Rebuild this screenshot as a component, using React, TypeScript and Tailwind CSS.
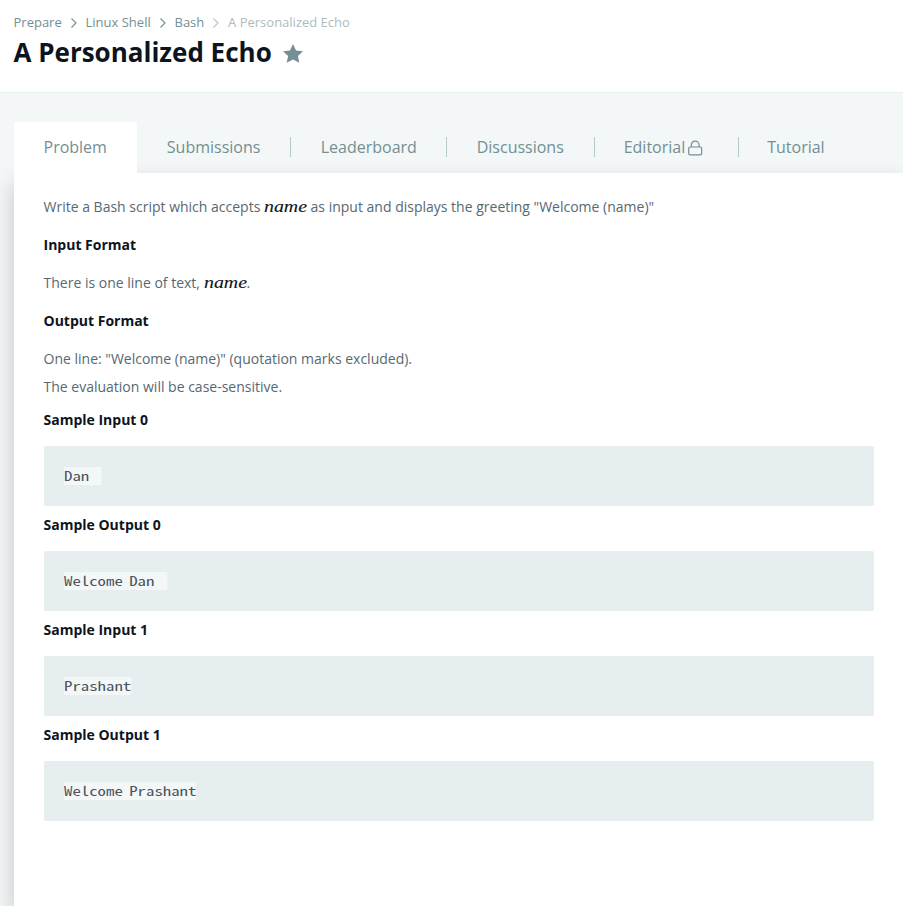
import React from "react";

const crumbs = ["Prepare", "Linux Shell", "Bash", "A Personalized Echo"];

const samples = [
  { title: "Sample Input 0", text: "Dan  " },
  { title: "Sample Output 0", text: "Welcome Dan  " },
  { title: "Sample Input 1", text: "Prashant" },
  { title: "Sample Output 1", text: "Welcome Prashant" },
];

function Chevron({ faded }: { faded: boolean }) {
  return (
    <svg width="8" height="12" viewBox="0 0 8 12" className={faded ? "ml-[7.8px] mr-[8px] opacity-50" : "ml-[7.8px] mr-[8px]"}>
      <path d="M1.5 1.5 L6 6 L1.5 10.5" fill="none" stroke="#738f93" strokeWidth="1.1" />
    </svg>
  );
}

function Lock() {
  return (
    <svg width="15" height="16" viewBox="0 0 15 16" className="ml-[3px] mt-[2px]" fill="none" stroke="#738f93" strokeWidth="1.2">
      <rect x="0.7" y="7" width="13" height="7.8" rx="1.4" />
      <path d="M3.3 7 V5 a3.9 3.9 0 0 1 7.8 0 V7" />
    </svg>
  );
}

function Name() {
  return (
    <span className="inline-block w-[43px] whitespace-nowrap align-baseline font-['Liberation_Serif',serif] text-[16px] italic leading-[20px] text-[#0e141e]">
      <span className="inline-block origin-left scale-x-[1.24] [-webkit-text-stroke:0.1px_#0e141e]">name</span>
    </span>
  );
}

function Tab({ children, width, divider }: { children: React.ReactNode; width: string; divider?: boolean }) {
  return (
    <div className={`flex h-[50px] items-center ${width}`}>
      <div className="flex h-[49px] grow items-center pl-[30px]">{children}</div>
      {divider && <div className="-mr-[0.5px] h-[20px] w-px bg-[#b7c9cc]" />}
    </div>
  );
}

export default function App() {
  return (
    <div className="flex h-[906px] w-[903px] flex-col overflow-hidden bg-[#f3f7f7] font-['Open_Sans',sans-serif] text-[14px] text-[#576871]">
      <header className="h-[93px] shrink-0 border-b border-[#e7eeef] bg-white pl-[13.5px] pt-[13px]">
        <nav className="flex h-[20px] items-center text-[13px] text-[#738f93]">
          {crumbs.map((c, i) => (
            <React.Fragment key={c}>
              {i > 0 && <Chevron faded={i === 3} />}
              <span className={i === 3 ? "text-[#abbcbe]" : ""}>{c}</span>
            </React.Fragment>
          ))}
        </nav>
        <div className="flex h-[38px] items-center">
          <h1 className="text-[26px] font-bold leading-[38px] text-[#0e141e]">A Personalized Echo</h1>
          <svg width="20" height="19" viewBox="0 0 20 19" className="ml-[11px] mt-[2px]">
            <path d="M10 0 L13 6.4 L20 7.2 L14.9 12 L16.3 18.8 L10 15.4 L3.7 18.8 L5.1 12 L0 7.2 L7 6.4 Z" fill="#738f93" />
          </svg>
        </div>
      </header>
      <div className="flex grow flex-col pl-[13.5px] pt-[29px]">
        <div className="flex h-[51px] text-[16px] text-[#738f93]">
          <div className="z-10 h-[51px] w-[123.3px] bg-white pl-[30px] leading-[50px]">Problem</div>
          <Tab width="w-[153.9px]" divider>Submissions</Tab>
          <Tab width="w-[156px]" divider>Leaderboard</Tab>
          <Tab width="w-[148px]" divider>Discussions</Tab>
          <Tab width="w-[144px]" divider><span className="-ml-[1px]">Editorial</span><Lock /></Tab>
          <Tab width="w-[120px]"><span className="-ml-[1.5px]">Tutorial</span></Tab>
        </div>
        <main className="grow bg-white pl-[30px] pr-[29px] pt-[20px] shadow-[0_10px_22px_rgba(0,0,0,0.2)]">
          <p className="h-[28px] leading-[28px]">
            Write a Bash script which accepts <Name /> as input and displays the greeting "Welcome (name)"
          </p>
          <h2 className="mt-[10px] h-[28px] font-bold leading-[28px] text-[#0e141e]">Input Format</h2>
          <p className="mt-[10px] h-[28px] leading-[28px]">There is one line of text, <Name />.</p>
          <h2 className="mt-[10px] h-[28px] font-bold leading-[28px] text-[#0e141e]">Output Format</h2>
          <p className="mt-[10px] leading-[28px]">One line: "Welcome (name)" (quotation marks excluded).<br />The evaluation will be case-sensitive.</p>
          {samples.map((s) => (
            <section key={s.title} className="mb-[5px] mt-[5px] h-[100px]">
              <h2 className="h-[40px] font-bold leading-[28px] text-[#0e141e]">{s.title}</h2>
              <pre className="flex h-[60px] items-center rounded-[2px] bg-[#e7eeef] pl-[20px] text-[#4b545f]">
                <code className="h-[18px] origin-left scale-x-[1.292] bg-[#f3f7f7] font-['Noto_Sans_Mono_CJK_SC','Noto_Sans_Mono_CJK_JP','DejaVu_Sans_Mono',monospace] text-[13px] font-light leading-[18px] [word-spacing:-1.55px]">{s.text}</code>
              </pre>
            </section>
          ))}
        </main>
      </div>
    </div>
  );
}
